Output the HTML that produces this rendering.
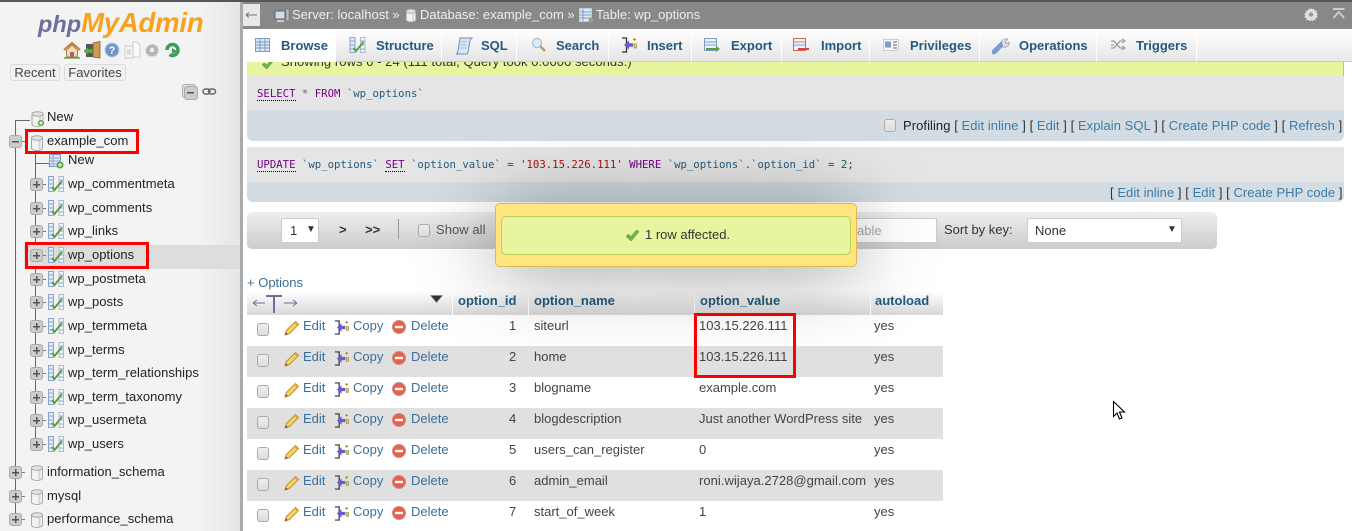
<!DOCTYPE html>
<html><head><meta charset="utf-8"><title>phpMyAdmin</title>
<style>
*{box-sizing:border-box}
html,body{margin:0;padding:0;width:1352px;height:531px;overflow:hidden;background:#fff}
body{font-family:"Liberation Sans",sans-serif;font-size:13px;color:#444;position:relative}
.a{position:absolute;white-space:nowrap}
.l{color:#235a81}
.t{position:absolute;white-space:nowrap;color:#222;font-size:13px;line-height:16px;letter-spacing:.04px}
.tab{position:absolute;top:29px;height:33px;background:linear-gradient(#fff,#e5e5e5);border-right:1px solid #fff;border-bottom:1px solid #ccc}
.tab b{position:absolute;top:9px;font-size:13px;line-height:16px;color:#235a81;white-space:nowrap}
.tab svg{position:absolute;top:8px}
.m{font-family:"DejaVu Sans Mono",monospace;font-size:10.67px;line-height:14px;color:#235a81;position:absolute;white-space:pre}
.k{color:#708;border-bottom:1px dotted #000}
.c{position:absolute;width:12px;height:13px;border:1px solid #aaa;border-radius:3px;background:linear-gradient(#eee,#ddd)}
.red{position:absolute;border:3px solid #f00}
.bar{position:absolute;left:247px;background:#d3dce3;border-radius:0 0 6px 6px}
.gr{position:absolute;left:247px;width:696px;height:31px}
.th{position:absolute;top:291px;height:24px;background:linear-gradient(#fff,#d8d8d8);border-right:1px solid #fff}
.th b{position:absolute;top:2px;left:5px;color:#235a81;font-size:13px;line-height:16px}
.pm{position:absolute;width:13px;height:13px;border:1px solid #aaa;border-radius:3px;background:#ccc;box-shadow:7px 0 0 -6px #777,8px 0 0 -6px #777,9px 0 0 -6px #777}
.pm:before{content:"";position:absolute;left:2px;top:5px;width:7px;height:1px;background:#555;box-shadow:0 .5px 0 #555}
.pm.p:after{content:"";position:absolute;left:5px;top:2px;width:1px;height:7px;background:#555;box-shadow:.5px 0 0 #555}
.lk{color:#3a6f9a;line-height:16px}
.v{line-height:16px}
</style></head><body>
<svg width="0" height="0" style="position:absolute"><defs>
<symbol id="db" viewBox="0 0 14 16"><path d="M1.500 3v10c0 1.500 2.500 2.500 5.500 2.500s5.500-1 5.500-2.500V3z" fill="#f2f2f2" stroke="#aaa"/><ellipse cx="7" cy="3" rx="5.500" ry="2.300" fill="#e4e4e4" stroke="#aaa"/><path d="M9.500 5.500v9" stroke="#d4d4d4" stroke-width="2"/></symbol>
<symbol id="tb" viewBox="0 0 16 16"><rect x=".5" y=".5" width="5" height="15" fill="#e2ecf7" stroke="#8aa6cc"/><rect x="11" y=".5" width="4.500" height="15" fill="#f2f6fa" stroke="#a8bcd6"/><path d="M1 4h4M1 8h4M1 12h4M11.500 4h3.500M11.500 8h3.500M11.500 12h3.500" stroke="#8aa6cc"/><path d="M4 11l2.500 3L14 5" fill="none" stroke="#5c9a45" stroke-width="2"/></symbol>
<symbol id="ed" viewBox="0 0 16 16"><path d="M1 15l1.300-4.500L11.500 1.500l3 3-9.200 9.200z" fill="#f6d25e" stroke="#b98a34" stroke-width=".9"/><path d="M1 15l.8-3 2.300 2.300z" fill="#8a5a20"/><path d="M10.800 2.200l3 3" stroke="#e8a040" stroke-width="1.500"/></symbol>
<symbol id="cp" viewBox="0 0 16 16"><path d="M1 1h4.500v14H1" fill="none" stroke="#333" stroke-width="1.300"/><path d="M3 8l5-4.500V6.300h4v3.400H8v2.800z" fill="#6a5acd"/><path d="M13.500 1v3M12 2.500h3" stroke="#b58900"/><rect x="13" y="7" width="2.500" height="4" fill="#e8d060" stroke="#8a7a20" stroke-width=".6"/></symbol>
<symbol id="dl" viewBox="0 0 14 14"><circle cx="7" cy="7" r="6.500" fill="#e8604c" stroke="#c9908a"/><rect x="3" y="5.800" width="8" height="2.400" fill="#fff"/></symbol>
<symbol id="gear" viewBox="0 0 16 16"><path d="M8 1l1 2 2-1 .5 2.200 2.300-.2-.4 2.300L15 7.500 13.700 9l1 2-2.200.5.200 2.300-2.300-.4L9.500 15 8 13.800 6.500 15l-.9-1.600-2.300.4.200-2.300L1.300 11l1-2L1 7.500l2.100-1.200-.4-2.300L5 4.200 5.500 2l2 1z"/></symbol>
<symbol id="chk" viewBox="0 0 16 14"><path d="M1 8l2.500-2.500L6.500 8l6-7L15 3 6.500 13z" fill="#6fb24f" stroke="#4c8c34" stroke-width=".5"/></symbol>
</defs></svg>

<!-- sidebar -->
<div class="a" style="left:0;top:0;width:1352px;height:2px;background:#555"></div>
<div class="a" style="left:0;top:2px;width:240px;height:529px;background:linear-gradient(90deg,#f3f3f3 0,#f3f3f3 200px,#e6e6e6 239px)"></div>
<div class="a" style="left:240px;top:2px;width:3px;height:529px;background:#aaa"></div>

<div class="a" style="left:38px;top:5px;font-size:23.5px;line-height:36px;font-weight:bold;font-style:italic;color:#6c6f9c">php<span style="color:#f7a21e;font-size:27.5px;letter-spacing:-.2px">MyAdmin</span></div>

<svg class="a" style="left:63px;top:41px" width="118" height="18" viewBox="0 0 118 18">
<path d="M1 9l8-7 8 7" fill="none" stroke="#c47a3a" stroke-width="2"/><path d="M3.500 9l5.500-5 5.500 5v7h-11z" fill="#f0dcae" stroke="#8a6a40" stroke-width=".8"/><rect x="7" y="11" width="4" height="5" fill="#a66"/><path d="M1 17h16" stroke="#6a9a40" stroke-width="1.500"/>
<rect x="23" y="3" width="8" height="13" fill="#555"/><path d="M30 2l7-1.500V17l-7-1z" fill="#d09a50" stroke="#8a6030" stroke-width=".8"/><path d="M21 10l4-4v2h5v4h-5v2z" fill="#5cae4a" stroke="#3a7a30" stroke-width=".5"/>
<circle cx="49" cy="9" r="6.800" fill="#6c93c9" stroke="#a9bfe0" stroke-width="1.200"/><text x="49" y="13" font-size="11" font-weight="bold" fill="#fff" text-anchor="middle" font-family="Liberation Sans">?</text>
<path d="M62 5h8v12h-8z" fill="#f5f5f5" stroke="#ccc"/><path d="M70 1h4l3 3v12h-7z" fill="#fafafa" stroke="#ccc"/><rect x="64" y="8" width="4" height="6" fill="#ddd"/>
<use href="#gear" x="81" y="1" width="16" height="16" fill="#b4b4b4"/><circle cx="89" cy="9" r="2.300" fill="#eee"/>
<path d="M104 9a5.500 5.500 0 1 1 2.500 4.600" fill="none" stroke="#3e9d5c" stroke-width="3.500"/><path d="M109 7l5 3-5 3z" fill="#3e9d5c"/>
</svg>

<div class="a" style="left:10px;top:64px;width:50px;height:17px;border:1px solid #ddd;border-radius:3px;background:#f1f1f1;text-align:center;line-height:15px;color:#444">Recent</div>
<div class="a" style="left:64px;top:64px;width:62px;height:17px;border:1px solid #ddd;border-radius:3px;background:#f1f1f1;text-align:center;line-height:15px;color:#444">Favorites</div>

<div class="a" style="left:182px;top:84px;width:14px;height:14px;border:1px solid #aaa;border-radius:3px;background:#e4e4e4"></div>
<div class="pm a" style="left:184px;top:86px;width:14px;height:14px;box-shadow:none"></div>
<svg class="a" style="left:202px;top:87px" width="15" height="10" viewBox="0 0 15 10"><rect x="1" y="2" width="7" height="5" rx="2.500" fill="none" stroke="#666" stroke-width="1.500"/><rect x="6.500" y="2" width="7" height="5" rx="2.500" fill="none" stroke="#666" stroke-width="1.500"/></svg>

<!-- tree lines -->
<div class="a" style="left:15px;top:120px;width:1px;height:398px;background:#666"></div>
<div class="a" style="left:15px;top:120px;width:15px;height:1px;background:#666"></div>
<div class="a" style="left:35px;top:148px;width:1px;height:296px;background:#666"></div>
<div class="a" style="left:35px;top:163px;width:15px;height:1px;background:#666"></div>
<div class="a" style="left:24px;top:245px;width:216px;height:24px;background:#ddd"></div>

<svg class="a" style="left:30px;top:111px" width="15" height="16"><use href="#db"/><circle cx="11" cy="12" r="3.500" fill="#5aa544" stroke="#fff" stroke-width=".6"/><path d="M9 12h4M11 10v4" stroke="#fff"/></svg>
<div class="t" style="left:47px;top:109px">New</div>
<div class="pm a" style="left:9px;top:135px"></div>
<svg class="a" style="left:30px;top:135px" width="14" height="16"><use href="#db"/></svg>
<div class="t" style="left:47px;top:133px">example_com</div>
<svg class="a" style="left:49px;top:154px" width="15" height="15" viewBox="0 0 15 15"><rect x=".5" y=".5" width="11" height="12" fill="#dfe9f5" stroke="#7d9cc4"/><path d="M1 4h10M1 7h10M1 10h10M4 1v11" stroke="#8fa8cc"/><circle cx="11" cy="11" r="3.500" fill="#5aa544"/><path d="M9 11h4M11 9v4" stroke="#fff"/></svg>
<div class="t" style="left:68px;top:152px">New</div>

<div class="pm p a" style="left:30px;top:178px"></div><svg class="a" style="left:48px;top:176px" width="16" height="16"><use href="#tb"/></svg><div class="t" style="left:68px;top:176px">wp_commentmeta</div>
<div class="pm p a" style="left:30px;top:202px"></div><svg class="a" style="left:48px;top:200px" width="16" height="16"><use href="#tb"/></svg><div class="t" style="left:68px;top:200px">wp_comments</div>
<div class="pm p a" style="left:30px;top:225px"></div><svg class="a" style="left:48px;top:223px" width="16" height="16"><use href="#tb"/></svg><div class="t" style="left:68px;top:223px">wp_links</div>
<div class="pm p a" style="left:30px;top:249px"></div><svg class="a" style="left:48px;top:247px" width="16" height="16"><use href="#tb"/></svg><div class="t" style="left:68px;top:247px">wp_options</div>
<div class="pm p a" style="left:30px;top:273px"></div><svg class="a" style="left:48px;top:271px" width="16" height="16"><use href="#tb"/></svg><div class="t" style="left:68px;top:271px">wp_postmeta</div>
<div class="pm p a" style="left:30px;top:296px"></div><svg class="a" style="left:48px;top:294px" width="16" height="16"><use href="#tb"/></svg><div class="t" style="left:68px;top:294px">wp_posts</div>
<div class="pm p a" style="left:30px;top:320px"></div><svg class="a" style="left:48px;top:318px" width="16" height="16"><use href="#tb"/></svg><div class="t" style="left:68px;top:318px">wp_termmeta</div>
<div class="pm p a" style="left:30px;top:344px"></div><svg class="a" style="left:48px;top:342px" width="16" height="16"><use href="#tb"/></svg><div class="t" style="left:68px;top:342px">wp_terms</div>
<div class="pm p a" style="left:30px;top:367px"></div><svg class="a" style="left:48px;top:365px" width="16" height="16"><use href="#tb"/></svg><div class="t" style="left:68px;top:365px">wp_term_relationships</div>
<div class="pm p a" style="left:30px;top:391px"></div><svg class="a" style="left:48px;top:389px" width="16" height="16"><use href="#tb"/></svg><div class="t" style="left:68px;top:389px">wp_term_taxonomy</div>
<div class="pm p a" style="left:30px;top:414px"></div><svg class="a" style="left:48px;top:412px" width="16" height="16"><use href="#tb"/></svg><div class="t" style="left:68px;top:412px">wp_usermeta</div>
<div class="pm p a" style="left:30px;top:438px"></div><svg class="a" style="left:48px;top:436px" width="16" height="16"><use href="#tb"/></svg><div class="t" style="left:68px;top:436px">wp_users</div>

<div class="pm p a" style="left:9px;top:466px"></div><svg class="a" style="left:30px;top:465px" width="14" height="16"><use href="#db"/></svg><div class="t" style="left:47px;top:464px">information_schema</div>
<div class="pm p a" style="left:9px;top:490px"></div><svg class="a" style="left:30px;top:489px" width="14" height="16"><use href="#db"/></svg><div class="t" style="left:47px;top:488px">mysql</div>
<div class="pm p a" style="left:9px;top:513px"></div><svg class="a" style="left:30px;top:512px" width="14" height="16"><use href="#db"/></svg><div class="t" style="left:47px;top:511px">performance_schema</div>

<div class="red" style="left:25px;top:129px;width:114px;height:25px"></div>
<div class="red" style="left:25px;top:242px;width:124px;height:27px"></div>

<!-- top bar -->
<div class="a" style="left:243px;top:2px;width:1109px;height:27px;background:#888"></div>
<div class="a" style="left:243px;top:4px;width:17px;height:22px;background:#e8e8e8"></div>
<svg class="a" style="left:245px;top:10px" width="13" height="10" viewBox="0 0 13 10" fill="none" stroke="#777"><path d="M1 5h11M1 5l3-2.500M1 5l3 2.500"/></svg>
<svg class="a" style="left:274px;top:8px" width="16" height="15" viewBox="0 0 16 15"><rect x="1" y="3" width="10" height="8" fill="#cfdcec" stroke="#666"/><rect x="12" y="1" width="3" height="12" fill="#bbb" stroke="#666" stroke-width=".5"/><path d="M3 13h7" stroke="#ccc" stroke-width="2"/></svg>
<div class="a" style="left:292px;top:7px;color:#eee;line-height:16px">Server: localhost »</div>
<svg class="a" style="left:405px;top:8px" width="12" height="15"><use href="#db"/></svg>
<div class="a" style="left:420px;top:7px;color:#eee;line-height:16px">Database: example_com »</div>
<svg class="a" style="left:579px;top:8px" width="15" height="15" viewBox="0 0 15 15"><rect x=".5" y=".5" width="12" height="13" fill="#dfe9f5" stroke="#bcd"/><path d="M1 4h11M1 7h11M1 10h11M4 1v12" stroke="#7d9cc4"/><circle cx="12" cy="12" r="2.500" fill="#999"/></svg>
<div class="a" style="left:596px;top:7px;color:#eee;line-height:16px">Table: wp_options</div>
<svg class="a" style="left:1303px;top:6px" width="16" height="17"><use href="#gear" fill="#e0e0e0"/><circle cx="8" cy="8.500" r="2.200" fill="#999"/></svg>
<svg class="a" style="left:1332px;top:7px" width="14" height="14" viewBox="0 0 14 14"><path d="M1 2h11.500" stroke="#ccc" stroke-width="2"/><path d="M1.500 11l5.300-6 5.300 6" fill="none" stroke="#ccc" stroke-width="2"/></svg>

<!-- tabs -->
<div class="a" style="left:243px;top:29px;width:1109px;height:33px;background:linear-gradient(#fff,#e9e9e9);border-bottom:1px solid #ccc"></div>
<div class="tab" style="left:243px;width:93px;background:#fff;border:0"><svg style="left:12px" width="16" height="16" viewBox="0 0 16 16"><rect x=".5" y="1.500" width="14" height="13" fill="#dfe9f5" stroke="#7d9cc4"/><path d="M1 5h13M1 8h13M1 11h13M5 2v12M10 2v12" stroke="#7d9cc4"/></svg><b style="left:38px">Browse</b></div>
<div class="tab" style="left:336px;width:106px"><svg style="left:13px" width="17" height="16"><use href="#tb"/></svg><b style="left:40px">Structure</b></div>
<div class="tab" style="left:442px;width:75px"><svg style="left:13px" width="18" height="18" viewBox="0 0 18 18"><path d="M5 1h12c-1.500 1-2 2-2 3l-2 11c-.3 1.500-1 2-2 2H1c1-.5 2-1 2-3z" fill="#dbe6f4" stroke="#6d8fbe"/><path d="M6 5h6M5.500 8h6M5 11h6" stroke="#a8bdd9"/></svg><b style="left:39px">SQL</b></div>
<div class="tab" style="left:517px;width:92px"><svg style="left:14px" width="16" height="16" viewBox="0 0 16 16"><circle cx="6" cy="6" r="4.500" fill="#d9ebf9" stroke="#aab"/><path d="M9.500 9.500l4.500 4.500" stroke="#c49a5a" stroke-width="2.500"/></svg><b style="left:39px">Search</b></div>
<div class="tab" style="left:609px;width:83px"><svg style="left:12px" width="16" height="16"><use href="#cp"/></svg><b style="left:38px">Insert</b></div>
<div class="tab" style="left:692px;width:90px"><svg style="left:12px" width="17" height="17" viewBox="0 0 17 17"><rect x=".5" y="1.500" width="12" height="12" fill="#eef3f9" stroke="#7d9cc4"/><path d="M1 5h11M1 8h11" stroke="#7d9cc4"/><path d="M2 12h11" stroke="#5a9e3e" stroke-width="2"/><path d="M12 9l4 3-4 3z" fill="#5a9e3e"/></svg><b style="left:39px">Export</b></div>
<div class="tab" style="left:782px;width:88px"><svg style="left:11px" width="17" height="17" viewBox="0 0 17 17"><rect x=".5" y="1.500" width="12" height="12" fill="#eef3f9" stroke="#c65"/><path d="M1 5h11M1 8h11" stroke="#7d9cc4"/><path d="M5 12h11" stroke="#e0404a" stroke-width="2"/></svg><b style="left:39px">Import</b></div>
<div class="tab" style="left:870px;width:110px"><svg style="left:13px" width="17" height="16" viewBox="0 0 17 16"><rect x=".5" y="2.500" width="15" height="11" fill="#f6f6f6" stroke="#ccc"/><rect x="2" y="4.500" width="6" height="6" fill="#7d9cc4"/><path d="M10 5h4M10 8h4M10 11h4" stroke="#666"/></svg><b style="left:40px">Privileges</b></div>
<div class="tab" style="left:980px;width:117px"><svg style="left:12px" width="18" height="18" viewBox="0 0 18 18"><path d="M2 15L11 6" stroke="#7b9bd0" stroke-width="5" stroke-linecap="round"/><path d="M10 7c-1-3 1-6 6-5l-3 3 1 2 3-2c1 3-2 6-6 5z" fill="#dde4ee" stroke="#8a93a3" stroke-width=".7"/></svg><b style="left:39px">Operations</b></div>
<div class="tab" style="left:1097px;width:100px"><svg style="left:13px" width="16" height="16" viewBox="0 0 16 16" fill="none" stroke="#888"><path d="M1 4h3l6 7h3M1 11h3l6-7h3M1 8h3"/><path d="M12 2l3 2-3 2M12 9l3 2-3 2"/></svg><b style="left:39px">Triggers</b></div>

<!-- messages -->
<div class="a" style="left:247px;top:62px;width:1097px;height:14px;background:#e8f59f;border-right:1px solid #b6cf5f;overflow:hidden"><svg class="a" style="left:14px;top:-4px" width="14" height="12"><use href="#chk"/></svg><div class="a" style="left:34px;top:-8px;color:#333;line-height:16px;letter-spacing:.05px">Showing rows 0 - 24 (111 total, Query took 0.0006 seconds.)</div></div>
<div class="a" style="left:247px;top:76px;width:1097px;height:34px;background:#e5e5e5"></div>
<div class="m" style="left:257px;top:87px"><span class="k">SELECT</span> <span style="color:#666">*</span> <span style="color:#708">FROM</span> `wp_options`</div>
<div class="bar" style="top:110px;width:1097px;height:31px"></div>
<div class="c" style="left:884px;top:119px"></div>
<div class="a" style="left:903px;top:118px;line-height:16px;color:#222;letter-spacing:.06px">Profiling <span style="color:#333">[</span> <span style="color:#3a7ba8">Edit inline</span> <span style="color:#333">] [</span> <span style="color:#3a7ba8">Edit</span> <span style="color:#333">] [</span> <span style="color:#3a7ba8">Explain SQL</span> <span style="color:#333">] [</span> <span style="color:#3a7ba8">Create PHP code</span> <span style="color:#333">] [</span> <span style="color:#3a7ba8">Refresh</span> <span style="color:#333">]</span></div>

<div class="a" style="left:247px;top:147px;width:1097px;height:35px;background:#e5e5e5"></div>
<div class="m" style="left:257px;top:158px"><span class="k">UPDATE</span> `wp_options` <span class="k">SET</span> `option_value` <span style="color:#444">=</span> <span style="color:#a11">'103.15.226.111'</span> <span style="color:#708">WHERE</span> `wp_options`.`option_id` <span style="color:#444">=</span> <span style="color:#164">2</span><span style="color:#444">;</span></div>
<div class="bar" style="top:182px;width:1097px;height:20px"></div>
<div class="a" style="left:1110px;top:185px;line-height:16px;color:#333;letter-spacing:.05px">[ <span style="color:#3a7ba8">Edit inline</span> ] [ <span style="color:#3a7ba8">Edit</span> ] [ <span style="color:#3a7ba8">Create PHP code</span> ]</div>

<!-- nav -->
<div class="a" style="left:247px;top:212px;width:970px;height:37px;border-radius:5px;background:linear-gradient(#eee,#ccc)"></div>
<div class="a" style="left:281px;top:218px;width:38px;height:25px;background:#fff;border:1px solid #ccc;border-radius:2px;color:#333;line-height:23px;padding-left:8px">1<span style="position:absolute;left:24px;top:-1px;font-size:10px">▼</span></div>
<div class="a" style="left:339px;top:222px;font-weight:bold;color:#333;line-height:16px">&gt;</div>
<div class="a" style="left:365px;top:222px;font-weight:bold;color:#333;line-height:16px">&gt;&gt;</div>
<div class="a" style="left:398px;top:219px;width:1px;height:20px;background:#999"></div>
<div class="c" style="left:418px;top:224px"></div>
<div class="a" style="left:436px;top:222px;line-height:16px;color:#555;letter-spacing:.05px">Show all</div>
<div class="a" style="left:800px;top:218px;width:137px;height:25px;background:#fff;border:1px solid #ccc;color:#aaa;line-height:23px;padding-left:56px">able</div>
<div class="a" style="left:944px;top:222px;line-height:16px;color:#333">Sort by key:</div>
<div class="a" style="left:1027px;top:218px;width:155px;height:25px;background:#fff;border:1px solid #ccc;border-radius:2px;color:#333;line-height:23px;padding-left:7px">None<span style="position:absolute;left:139px;top:-1px;font-size:10px">▼</span></div>

<!-- table -->
<div class="a" style="left:247px;top:275px;line-height:16px;color:#3a6f9a">+ Options</div>
<div class="th" style="left:247px;width:206px"></div>
<svg class="a" style="left:252px;top:293px" width="48" height="22" viewBox="0 0 48 22" fill="none" stroke="#6c6f9c"><path d="M1 10h12M1 10l4-3M1 10l4 3M32 10h13M45 10l-4-3M45 10l-4 3"/><path d="M14 3h16M22 3v17" stroke-width="2"/></svg>
<svg class="a" style="left:430px;top:295px" width="13" height="9"><path d="M.5 .5h12L6.500 7.500z" fill="#333" stroke="#888" stroke-width=".6"/></svg>
<div class="th" style="left:453px;width:76px"><b>option_id</b></div>
<div class="th" style="left:529px;width:166px"><b>option_name</b></div>
<div class="th" style="left:695px;width:176px"><b>option_value</b></div>
<div class="th" style="left:871px;width:72px;border:0"><b style="left:4px">autoload</b></div>

<div class="gr" style="top:346px;background:#e0e0e0"></div>
<div class="gr" style="top:408px;background:#e0e0e0"></div>
<div class="gr" style="top:470px;background:#e0e0e0"></div>

<div class="c" style="left:257px;top:323px"></div><svg class="a" style="left:284px;top:320px" width="16" height="16"><use href="#ed"/></svg><div class="a lk" style="left:303px;top:318px">Edit</div><svg class="a" style="left:334px;top:320px" width="15" height="15"><use href="#cp"/></svg><div class="a lk" style="left:353px;top:318px">Copy</div><svg class="a" style="left:392px;top:320px" width="14" height="14"><use href="#dl"/></svg><div class="a lk" style="left:411px;top:318px">Delete</div><div class="a v" style="left:509px;top:318px">1</div><div class="a v" style="left:534px;top:318px">siteurl</div><div class="a v" style="left:699px;top:318px">103.15.226.111</div><div class="a v" style="left:874px;top:318px">yes</div>
<div class="c" style="left:257px;top:354px"></div><svg class="a" style="left:284px;top:351px" width="16" height="16"><use href="#ed"/></svg><div class="a lk" style="left:303px;top:349px">Edit</div><svg class="a" style="left:334px;top:351px" width="15" height="15"><use href="#cp"/></svg><div class="a lk" style="left:353px;top:349px">Copy</div><svg class="a" style="left:392px;top:351px" width="14" height="14"><use href="#dl"/></svg><div class="a lk" style="left:411px;top:349px">Delete</div><div class="a v" style="left:509px;top:349px">2</div><div class="a v" style="left:534px;top:349px">home</div><div class="a v" style="left:699px;top:349px">103.15.226.111</div><div class="a v" style="left:874px;top:349px">yes</div>
<div class="c" style="left:257px;top:385px"></div><svg class="a" style="left:284px;top:382px" width="16" height="16"><use href="#ed"/></svg><div class="a lk" style="left:303px;top:380px">Edit</div><svg class="a" style="left:334px;top:382px" width="15" height="15"><use href="#cp"/></svg><div class="a lk" style="left:353px;top:380px">Copy</div><svg class="a" style="left:392px;top:382px" width="14" height="14"><use href="#dl"/></svg><div class="a lk" style="left:411px;top:380px">Delete</div><div class="a v" style="left:509px;top:380px">3</div><div class="a v" style="left:534px;top:380px">blogname</div><div class="a v" style="left:699px;top:380px">example.com</div><div class="a v" style="left:874px;top:380px">yes</div>
<div class="c" style="left:257px;top:416px"></div><svg class="a" style="left:284px;top:413px" width="16" height="16"><use href="#ed"/></svg><div class="a lk" style="left:303px;top:411px">Edit</div><svg class="a" style="left:334px;top:413px" width="15" height="15"><use href="#cp"/></svg><div class="a lk" style="left:353px;top:411px">Copy</div><svg class="a" style="left:392px;top:413px" width="14" height="14"><use href="#dl"/></svg><div class="a lk" style="left:411px;top:411px">Delete</div><div class="a v" style="left:509px;top:411px">4</div><div class="a v" style="left:534px;top:411px">blogdescription</div><div class="a v" style="left:699px;top:411px">Just another WordPress site</div><div class="a v" style="left:874px;top:411px">yes</div>
<div class="c" style="left:257px;top:447px"></div><svg class="a" style="left:284px;top:444px" width="16" height="16"><use href="#ed"/></svg><div class="a lk" style="left:303px;top:442px">Edit</div><svg class="a" style="left:334px;top:444px" width="15" height="15"><use href="#cp"/></svg><div class="a lk" style="left:353px;top:442px">Copy</div><svg class="a" style="left:392px;top:444px" width="14" height="14"><use href="#dl"/></svg><div class="a lk" style="left:411px;top:442px">Delete</div><div class="a v" style="left:509px;top:442px">5</div><div class="a v" style="left:534px;top:442px">users_can_register</div><div class="a v" style="left:699px;top:442px">0</div><div class="a v" style="left:874px;top:442px">yes</div>
<div class="c" style="left:257px;top:478px"></div><svg class="a" style="left:284px;top:475px" width="16" height="16"><use href="#ed"/></svg><div class="a lk" style="left:303px;top:473px">Edit</div><svg class="a" style="left:334px;top:475px" width="15" height="15"><use href="#cp"/></svg><div class="a lk" style="left:353px;top:473px">Copy</div><svg class="a" style="left:392px;top:475px" width="14" height="14"><use href="#dl"/></svg><div class="a lk" style="left:411px;top:473px">Delete</div><div class="a v" style="left:509px;top:473px">6</div><div class="a v" style="left:534px;top:473px">admin_email</div><div class="a v" style="left:699px;top:473px;letter-spacing:.03px">roni.wijaya.2728@gmail.com</div><div class="a v" style="left:874px;top:473px">yes</div>
<div class="c" style="left:257px;top:509px"></div><svg class="a" style="left:284px;top:506px" width="16" height="16"><use href="#ed"/></svg><div class="a lk" style="left:303px;top:504px">Edit</div><svg class="a" style="left:334px;top:506px" width="15" height="15"><use href="#cp"/></svg><div class="a lk" style="left:353px;top:504px">Copy</div><svg class="a" style="left:392px;top:506px" width="14" height="14"><use href="#dl"/></svg><div class="a lk" style="left:411px;top:504px">Delete</div><div class="a v" style="left:509px;top:504px">7</div><div class="a v" style="left:534px;top:504px">start_of_week</div><div class="a v" style="left:699px;top:504px">1</div><div class="a v" style="left:874px;top:504px">yes</div>

<div class="red" style="left:694px;top:313px;width:102px;height:65px"></div>

<!-- popup -->
<div class="a" style="left:495px;top:203px;width:362px;height:64px;background:#ffe57e;border:1px solid #e0b84f;border-radius:5px;box-shadow:0 5px 80px rgba(0,0,0,.4)"></div>
<div class="a" style="left:501px;top:216px;width:350px;height:39px;background:#e8f59f;border:1px solid #b6cf5f;border-radius:5px"></div>
<svg class="a" style="left:625px;top:229px" width="15" height="13"><use href="#chk"/></svg>
<div class="a" style="left:645px;top:227px;line-height:16px;color:#333">1 row affected.</div>

<!-- cursor -->
<svg class="a" style="left:1112px;top:400px" width="15" height="21" viewBox="0 0 15 21"><path d="M1.500 1.500v15l3.500-3.500 2.500 6 2.500-1-2.500-6h5z" fill="#fff" stroke="#000" stroke-width="1.100"/></svg>
</body></html>
